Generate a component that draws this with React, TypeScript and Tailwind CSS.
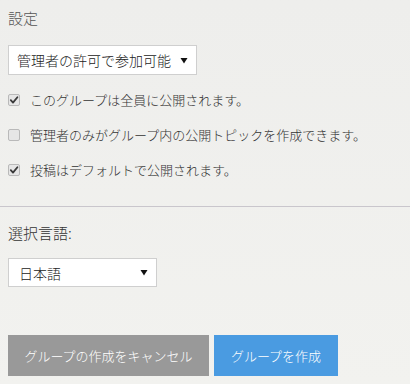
import React from "react";

const font = { fontFamily: '"Noto Sans CJK JP", "Noto Sans", sans-serif' };

function Arrow() {
  return (
    <svg width="8" height="7" viewBox="0 0 8 7" className="shrink-0">
      <polygon points="0.5,1 7.5,1 4,6.5" fill="#111" />
    </svg>
  );
}

function Box({ checked }: { checked: boolean }) {
  return (
    <span className="w-[12px] h-[12px] shrink-0 border border-[#b9b9b9] rounded-[2px] bg-[#e6e6e6] flex items-center justify-center">
      {checked && (
        <svg width="10" height="10" viewBox="0 0 10 10">
          <path d="M1.8 5.2 L4 7.6 L8.4 2.2" stroke="#3a3a3a" strokeWidth="1.8" fill="none" strokeLinecap="round" strokeLinejoin="round" />
        </svg>
      )}
    </span>
  );
}

function Row({ checked, label }: { checked: boolean; label: string }) {
  return (
    <div className="h-[35px] flex items-center gap-[10px] pl-[8px]">
      <Box checked={checked} />
      <span className="text-[13px] text-[#333] leading-none">{label}</span>
    </div>
  );
}

export default function App() {
  return (
    <div className="w-[410px] h-[384px] bg-gradient-to-b from-[#eeeeec] to-[#f2f2ef] overflow-hidden font-light" style={font}>
      <div className="pt-[8px] px-[8px]">
        <div className="text-[15px] leading-[20px] text-[#555]">設定</div>
        <div className="mt-[17px] w-[189px] h-[30px] bg-white border border-[#cfcfcf] flex items-center justify-between pl-[8px] pr-[8px]">
          <span className="text-[14px] text-[#222] leading-none">管理者の許可で参加可能</span>
          <Arrow />
        </div>
      </div>
      <div className="mt-[7px]">
        <Row checked label="このグループは全員に公開されます。" />
        <Row checked={false} label="管理者のみがグループ内の公開トピックを作成できます。" />
        <Row checked label="投稿はデフォルトで公開されます。" />
      </div>
      <div className="mt-[19px] border-t border-[#c9c6cc]" />
      <div className="px-[8px]">
        <div className="mt-[16px] text-[15px] leading-[20px] text-[#333]">選択言語:</div>
        <div className="mt-[15px] w-[149px] h-[29px] bg-white border border-[#cfcfcf] flex items-center justify-between pl-[10px] pr-[8px]">
          <span className="text-[14px] text-[#222] leading-none">日本語</span>
          <Arrow />
        </div>
        <div className="mt-[48px] flex gap-[5px]">
          <div className="h-[41px] w-[201px] bg-[#999999] text-white text-[13px] flex items-center justify-center">
            グループの作成をキャンセル
          </div>
          <div className="h-[41px] w-[124px] bg-[#4a9be1] text-white text-[13px] flex items-center justify-center">
            グループを作成
          </div>
        </div>
      </div>
    </div>
  );
}
